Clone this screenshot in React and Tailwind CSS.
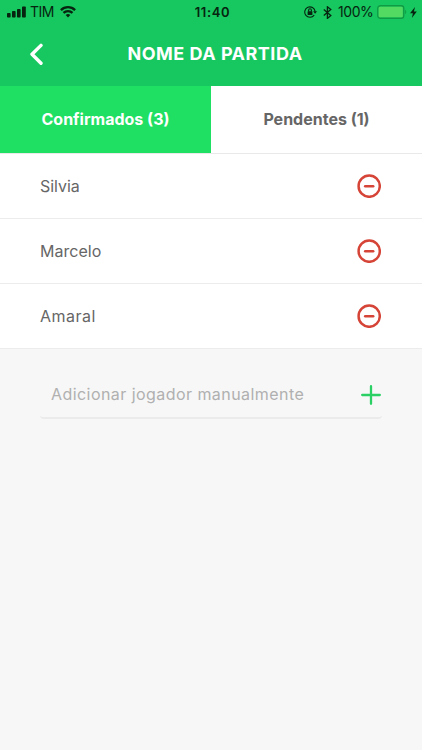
import React, { useState } from 'react'

const players = [
    { name: 'Silvia', style: 'tracking-[-0.05px]' },
    { name: 'Marcelo', style: 'tracking-[0.03px]' },
    { name: 'Amaral', style: 'tracking-[0.5px]' },
]

const SignalIcon = () => (
    <svg width="19" height="12" viewBox="0 0 19 12" fill="#06240f">
        <rect x="0" y="7" width="3.6" height="4.5" rx="0.8" />
        <rect x="5" y="5" width="3.6" height="6.5" rx="0.8" />
        <rect x="10" y="3" width="3.6" height="8.5" rx="0.8" />
        <rect x="15" y="0.5" width="3.8" height="11" rx="0.8" />
    </svg>
)

const WifiIcon = () => (
    <svg width="16" height="12" viewBox="0 0 16 12" fill="none" stroke="#06240f" strokeWidth="2.3">
        <path d="M0.9 4.1a10.2 10.2 0 0 1 14.2 0" />
        <path d="M3.5 6.9a6.4 6.4 0 0 1 9 0" />
        <path d="M5.7 9.1a3.3 3.3 0 0 1 4.6 0L8 11.4z" fill="#06240f" stroke="none" />
    </svg>
)

const RotationLockIcon = () => (
    <svg width="13" height="12" viewBox="0 0 13 12" fill="none" stroke="#06240f" strokeWidth="1.1">
        <path d="M10.2 9.1A5.2 5.2 0 1 1 11.1 5.4" />
        <path d="M9.1 5.2h3.9L11.1 7.7z" fill="#06240f" stroke="none" />
        <rect x="3.6" y="5.2" width="4.8" height="3.7" rx="0.5" fill="#06240f" stroke="none" />
        <path d="M4.6 5.4V4.2a1.4 1.4 0 0 1 2.8 0v1.2" />
    </svg>
)

const BluetoothIcon = () => (
    <svg width="9" height="13" viewBox="0 0 9 13" fill="none" stroke="#06240f" strokeWidth="1.3">
        <path d="M0.8 3.4l7 6-3.4 3V0.8l3.4 2.8-7 6" />
    </svg>
)

const BatteryIcon = () => (
    <svg width="30" height="14" viewBox="0 0 30 14" fill="none">
        <rect x="0.75" y="0.75" width="26" height="12.5" rx="2.6" stroke="#0f9a44" strokeWidth="1.3" />
        <rect x="1.7" y="1.7" width="24.1" height="10.6" rx="1.4" fill="#52da62" />
        <path d="M28.2 4.8c1.4 0.6 1.4 3.8 0 4.4z" fill="#0f9a44" />
    </svg>
)

const BoltIcon = () => (
    <svg width="7" height="11" viewBox="0 0 7 11" fill="#06240f">
        <path d="M5 0L0 6.2h2.9L1.9 11L6.8 4.6H3.9z" />
    </svg>
)

const RemoveIcon = () => (
    <svg width="24" height="24" viewBox="0 0 24 24" fill="none" stroke="#d54437" strokeWidth="2.5" strokeLinecap="round">
        <circle cx="12.2" cy="12.2" r="10.6" />
        <path d="M8.2 12.3h8" />
    </svg>
)

const StatusBar = () => (
    <div className="grid h-6 grid-cols-3 items-center text-[#06240f]">
        <div className="flex items-center pl-[7px]">
            <SignalIcon />
            <span className="ml-1 w-[24px] text-[14px] leading-6 tracking-[-0.5px]">TIM</span>
            <span className="ml-[6px]"><WifiIcon /></span>
        </div>
        <span className="pl-[3px] text-center text-[13px] leading-6 font-semibold tracking-[0.65px]">11:40</span>
        <div className="flex items-center justify-end pr-[5px]">
            <RotationLockIcon />
            <span className="ml-[6px]"><BluetoothIcon /></span>
            <span className="ml-[6px] w-[35px] text-[14px] leading-6 tracking-[-0.45px] whitespace-nowrap">100%</span>
            <span className="ml-[4px]"><BatteryIcon /></span>
            <span className="ml-[3px]"><BoltIcon /></span>
        </div>
    </div>
)

const App = () => {
    const [name, setName] = useState('')

    return (
        <div className="min-h-screen overflow-hidden bg-[#f7f7f7] font-['Inter',sans-serif] text-[#666666]">
            <header className="h-[86px] bg-[#17c75f]">
                <StatusBar />
                <div className="grid h-[60px] grid-cols-[72px_1fr_64px] items-center">
                    <button className="pl-[29px]">
                        <svg width="15" height="22" viewBox="0 0 15 22" fill="none" stroke="#ffffff" strokeWidth="3.4" strokeLinecap="round" strokeLinejoin="round">
                            <path d="M12 2.4L3 11.2l9 9" />
                        </svg>
                    </button>
                    <h1 className="pb-[2px] text-center text-[18px] font-bold tracking-[0.5px] whitespace-nowrap text-white">NOME DA PARTIDA</h1>
                </div>
            </header>

            {/* Tabs */}
            <div className="grid h-[68px] grid-cols-2 border-b border-[#e9e9e9] bg-white text-[16px] font-bold">
                <button className="bg-[#1fe062] pb-[2px] text-white">Confirmados (3)</button>
                <button className="pb-[2px]">Pendentes (1)</button>
            </div>

            <ul>
                {players.map((player) => (
                    <li key={player.name} className="flex h-[65px] items-center justify-between border-b border-[#ececec] bg-white pr-[41px] pl-10">
                        <span className={`text-[16px] ${player.style}`}>{player.name}</span>
                        <button><RemoveIcon /></button>
                    </li>
                ))}
            </ul>

            {/* Add player */}
            <div className="mx-10 mt-[21px] flex h-[49px] items-center rounded-[4px] border-b-2 border-[#ebebeb] pl-[11px]">
                <input
                    value={name}
                    onChange={(e) => setName(e.target.value)}
                    placeholder="Adicionar jogador manualmente"
                    className="min-w-0 flex-1 text-[16px] tracking-[0.44px] outline-none placeholder:text-[#b0b0b0]"
                />
                <button className="pt-[3px]">
                    <svg width="22" height="22" viewBox="0 0 22 22" fill="none" stroke="#2bd065" strokeWidth="2.3" strokeLinecap="round">
                        <path d="M11 2.2v17.6M2.2 11h17.6" />
                    </svg>
                </button>
            </div>
        </div>
    )
}

export default App
